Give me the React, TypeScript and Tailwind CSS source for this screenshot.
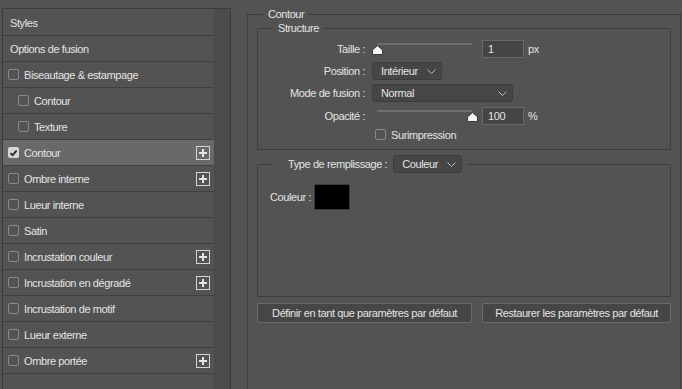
import React from 'react';

type Item = { label: string; check?: boolean; sub?: boolean; checked?: boolean; selected?: boolean; plus?: boolean };

const items: Item[] = [
  { label: 'Styles' },
  { label: 'Options de fusion' },
  { label: 'Biseautage & estampage', check: true },
  { label: 'Contour', check: true, sub: true },
  { label: 'Texture', check: true, sub: true },
  { label: 'Contour', check: true, checked: true, selected: true, plus: true },
  { label: 'Ombre interne', check: true, plus: true },
  { label: 'Lueur interne', check: true },
  { label: 'Satin', check: true },
  { label: 'Incrustation couleur', check: true, plus: true },
  { label: 'Incrustation en dégradé', check: true, plus: true },
  { label: 'Incrustation de motif', check: true },
  { label: 'Lueur externe', check: true },
  { label: 'Ombre portée', check: true, plus: true },
];

function CheckBox({ checked }: { checked?: boolean }) {
  if (checked) {
    return (
      <span className="flex h-[11px] w-[11px] shrink-0 items-center justify-center rounded-[2px] bg-[#d6d6d6]">
        <svg width="9" height="8" viewBox="0 0 9 8">
          <path d="M1.5 4.2 L3.6 6.2 L7.6 1.6" fill="none" stroke="#2a2a2a" strokeWidth="1.8" />
        </svg>
      </span>
    );
  }
  return <span className="h-[11px] w-[11px] shrink-0 rounded-[2px] border border-[#8a8a8a]" />;
}

function PlusBox() {
  return (
    <span className="ml-auto mr-[4px] flex h-[14px] w-[14px] items-center justify-center border border-[#d4d4d4]">
      <svg width="8" height="8" viewBox="0 0 8 8">
        <path d="M0 4 H8 M4 0 V8" stroke="#e4e4e4" strokeWidth="2" />
      </svg>
    </span>
  );
}

function Chevron() {
  return (
    <svg width="9" height="5" viewBox="0 0 9 5" className="ml-auto mr-[5px]">
      <path d="M0.5 0.5 L4.5 4.5 L8.5 0.5" fill="none" stroke="#bdbdbd" strokeWidth="1" />
    </svg>
  );
}

function Thumb() {
  return (
    <svg width="11" height="10" viewBox="0 0 11 10">
      <path d="M5.5 0.5 L10.5 5 V9.5 H0.5 V5 Z" fill="#f4f4f4" stroke="#3a3a3a" strokeWidth="1" strokeLinejoin="round" />
    </svg>
  );
}

function Slider({ at }: { at: 'start' | 'end' }) {
  return (
    <div className="relative ml-[7px] h-[18px] w-[106px]">
      <div className="absolute left-[5px] top-[3px] h-[2px] w-[95px] bg-[#6e6e6e]" />
      <div className={`absolute top-[5px] ${at === 'start' ? 'left-0' : 'left-[95px]'} flex`}>
        <Thumb />
      </div>
    </div>
  );
}

function Select({ value, width }: { value: string; width: string }) {
  return (
    <div className={`flex h-[18px] items-center rounded-[3px] border border-[#3c3c3c] bg-[#464646] pl-[8px] ${width}`}>
      <span>{value}</span>
      <Chevron />
    </div>
  );
}

function Label({ children }: { children: React.ReactNode }) {
  return <span className="w-[107px] shrink-0 text-right">{children}</span>;
}

export default function App() {
  return (
    <div className="flex h-[389px] w-[682px] overflow-hidden bg-[#535353] font-['Liberation_Sans',Arial,sans-serif] text-[11px] leading-[14px] tracking-[-0.4px] text-[#e4e4e4]">
      {/* style list */}
      <div className="ml-[2px] mt-[8px] flex h-[420px] w-[229px] shrink-0 border border-[#3b3b3b]">
        <div className="w-[211px] pt-[1px]">
          {items.map((it, i) => (
            <div
              key={i}
              className={`flex h-[26px] items-center border-b border-[#404040] ${it.selected ? 'bg-[#696969]' : ''} ${
                !it.check ? 'pl-[7px]' : it.sub ? 'gap-[5px] pl-[15px]' : 'gap-[5px] pl-[5px]'
              }`}
            >
              {it.check && <CheckBox checked={it.checked} />}
              <span>{it.label}</span>
              {it.plus && <PlusBox />}
            </div>
          ))}
        </div>
        <div className="flex-1 bg-[#4b4b4b]" />
      </div>

      {/* Contour settings */}
      <fieldset className="ml-[16px] mt-[7px] h-[420px] w-[434px] shrink-0 border border-[#3d3d3d] px-[9px]">
        <legend className="ml-[6px] px-[5px]">Contour</legend>

        <fieldset className="border border-[#3d3d3d] pb-[9px] pt-[5px]">
          <legend className="ml-[15px] px-[5px]">Structure</legend>

          <div className="flex h-[18px] items-center">
            <Label>Taille :</Label>
            <Slider at="start" />
            <div className="ml-[4px] flex h-[18px] w-[42px] items-center border border-[#686868] bg-[#454545] pl-[5px]">1</div>
            <span className="ml-[4px]">px</span>
          </div>

          <div className="mt-[4px] flex h-[18px] items-center">
            <Label>Position :</Label>
            <div className="ml-[7px]">
              <Select value="Intérieur" width="w-[70px]" />
            </div>
          </div>

          <div className="mt-[4px] flex h-[18px] items-center">
            <Label>Mode de fusion :</Label>
            <div className="ml-[7px]">
              <Select value="Normal" width="w-[141px]" />
            </div>
          </div>

          <div className="mt-[5px] flex h-[18px] items-center">
            <Label>Opacité :</Label>
            <Slider at="end" />
            <div className="ml-[4px] flex h-[18px] w-[42px] items-center border border-[#686868] bg-[#454545] pl-[5px]">100</div>
            <span className="ml-[4px]">%</span>
          </div>

          <div className="mt-[4px] flex h-[11px] items-center gap-[5px] pl-[117px]">
            <CheckBox />
            <span>Surimpression</span>
          </div>
        </fieldset>

        <fieldset className="mt-[5px] border border-[#3d3d3d] pb-[86px] pt-[11px]">
          <legend className="ml-[14px] pr-[6px]">
            <div className="flex items-center">
              <span className="pl-[16px]">Type de remplissage :</span>
              <div className="ml-[6px]">
                <Select value="Couleur" width="w-[69px]" />
              </div>
            </div>
          </legend>
          <div className="flex items-center pl-[12px]">
            <span className="w-[44px] shrink-0">Couleur :</span>
            <div className="h-[26px] w-[36px] border border-[#3a3a3a] bg-black" />
          </div>
        </fieldset>

        <div className="mt-[6px] flex gap-[10px]">
          <button className="h-[20px] w-[215px] rounded-[2px] border border-[#6a6a6a] bg-[#464646] text-center">
            Définir en tant que paramètres par défaut
          </button>
          <button className="h-[20px] w-[189px] rounded-[2px] border border-[#6a6a6a] bg-[#464646] text-center">
            Restaurer les paramètres par défaut
          </button>
        </div>
      </fieldset>
    </div>
  );
}
